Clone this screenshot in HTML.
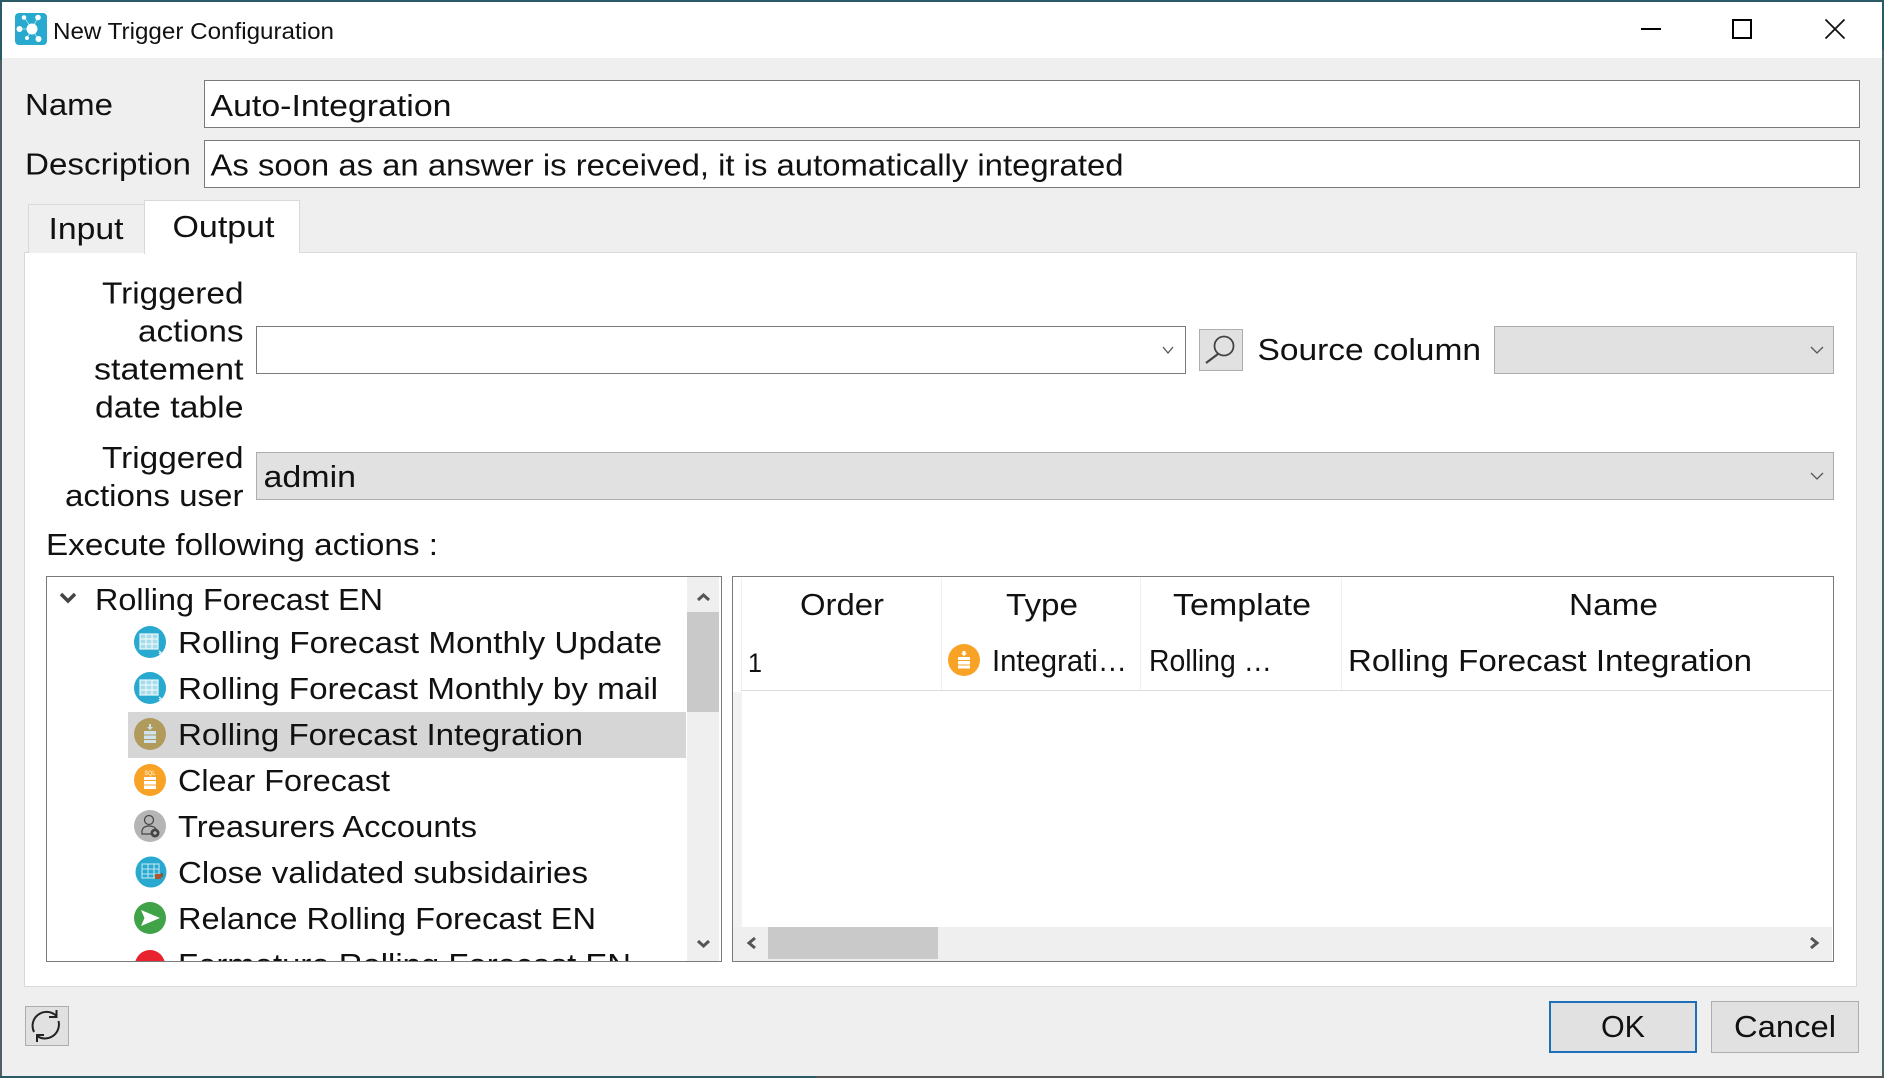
<!DOCTYPE html>
<html><head><meta charset="utf-8"><title>New Trigger Configuration</title>
<style>
html,body{margin:0;padding:0;background:#efefef;width:1884px;height:1078px;overflow:hidden}
svg{display:block}
text{font-family:"Liberation Sans",sans-serif;font-size:31px;fill:#111}
</style></head><body>
<svg width="1884" height="1078" viewBox="0 0 1884 1078" xmlns="http://www.w3.org/2000/svg">
<defs><clipPath id="tc"><rect x="47" y="577" width="640" height="384"/></clipPath></defs>
<rect width="1884" height="1078" fill="#2a5a66"/>
<rect x="2" y="2" width="1880" height="1074" fill="#efefef"/>
<rect x="2" y="2" width="1880" height="56" fill="#fff"/>
<rect x="0" y="60" width="2" height="1016" fill="#4f5f64"/><rect x="1882" y="50" width="2" height="1026" fill="#4b6268"/>
<rect x="816" y="1076" width="1068" height="2" fill="#555"/><rect x="0" y="1076" width="816" height="2" fill="#2a5a66"/>
<!-- title -->
<rect x="15" y="13" width="32" height="32" rx="4" fill="#27a9d0"/>
<path d="M32 29L19 29M32 29L24 17M32 29L38 17M32 29L27 38M32 29L38 39" stroke="#9adcee" stroke-width="1"/>
<g fill="#fff"><circle cx="32" cy="29" r="5.500"/><circle cx="19.500" cy="29" r="3"/><circle cx="24" cy="17.500" r="2.300"/><circle cx="38" cy="17.500" r="2.800"/><circle cx="27" cy="38" r="2"/><circle cx="38.500" cy="39" r="3"/></g>
<text x="53" y="39" style="font-size:23.500px" textLength="281" lengthAdjust="spacingAndGlyphs">New Trigger Configuration</text>
<rect x="1641" y="28" width="20" height="2" fill="#000"/>
<rect x="1733" y="20" width="18" height="18" fill="none" stroke="#000" stroke-width="2"/>
<path d="M1825.500 19.500L1844.500 38.500M1844.500 19.500L1825.500 38.500" stroke="#111" stroke-width="1.800" fill="none"/>
<!-- name / desc -->
<text x="25" y="115" textLength="88" lengthAdjust="spacingAndGlyphs">Name</text>
<text x="25" y="174.500" textLength="166" lengthAdjust="spacingAndGlyphs">Description</text>
<rect x="204.500" y="80.500" width="1655" height="47" fill="#fff" stroke="#7a7a7a"/>
<rect x="204.500" y="140.500" width="1655" height="47" fill="#fff" stroke="#7a7a7a"/>
<text x="210.500" y="116" textLength="241" lengthAdjust="spacingAndGlyphs">Auto-Integration</text>
<text x="210.500" y="175.500" textLength="913" lengthAdjust="spacingAndGlyphs">As soon as an answer is received, it is automatically integrated</text>
<!-- tabs and panel -->
<rect x="24.500" y="252.500" width="1832" height="734" fill="#fff" stroke="#d9d9d9"/>
<path d="M28.500 253V204.500H145V253" fill="#efefef" stroke="#d9d9d9"/>
<path d="M144.500 254V200.500H299.500V253" fill="#fff" stroke="#d9d9d9"/>
<rect x="145" y="250" width="154" height="4" fill="#fff"/>
<text x="48.500" y="239" textLength="75" lengthAdjust="spacingAndGlyphs">Input</text>
<text x="172.500" y="237" textLength="102" lengthAdjust="spacingAndGlyphs">Output</text>
<!-- labels -->
<text x="102" y="303.500" textLength="141.500" lengthAdjust="spacingAndGlyphs">Triggered</text>
<text x="138" y="341.500" textLength="105.500" lengthAdjust="spacingAndGlyphs">actions</text>
<text x="94" y="379.500" textLength="149.500" lengthAdjust="spacingAndGlyphs">statement</text>
<text x="95" y="417.500" textLength="148.500" lengthAdjust="spacingAndGlyphs">date table</text>
<text x="102" y="468" textLength="141.500" lengthAdjust="spacingAndGlyphs">Triggered</text>
<text x="65" y="506" textLength="178.500" lengthAdjust="spacingAndGlyphs">actions user</text>
<!-- combos -->
<rect x="256.500" y="326.500" width="929" height="47" fill="#fff" stroke="#7a7a7a"/>
<path d="M1163 347L1168 353L1173 347" fill="none" stroke="#555" stroke-width="1.300"/>
<rect x="1199.500" y="329.500" width="43" height="41" fill="#e1e1e1" stroke="#adadad"/>
<circle cx="1224" cy="346" r="9.500" fill="none" stroke="#444" stroke-width="1.800"/>
<path d="M1218 354L1206 363" stroke="#444" stroke-width="2.200" fill="none"/>
<text x="1257.500" y="360" textLength="223.500" lengthAdjust="spacingAndGlyphs">Source column</text>
<rect x="1494.500" y="326.500" width="339" height="47" fill="#e1e1e1" stroke="#adadad"/>
<path d="M1811 347L1817 353L1823 347" fill="none" stroke="#555" stroke-width="1.300"/>
<rect x="256.500" y="452.500" width="1577" height="47" fill="#e1e1e1" stroke="#adadad"/>
<path d="M1811 473L1817 479L1823 473" fill="none" stroke="#555" stroke-width="1.300"/>
<text x="263.500" y="487" textLength="92.500" lengthAdjust="spacingAndGlyphs">admin</text>
<text x="46" y="555" textLength="392" lengthAdjust="spacingAndGlyphs">Execute following actions :</text>
<!-- tree -->
<rect x="46.500" y="576.500" width="675" height="385" fill="#fff" stroke="#7a7a7a"/>
<rect x="128" y="712" width="558" height="46" fill="#d6d6d6"/>
<path d="M61 594L68 601L75 594" fill="none" stroke="#444" stroke-width="3.500"/>
<g clip-path="url(#tc)">
<text x="95" y="610" textLength="288" lengthAdjust="spacingAndGlyphs">Rolling Forecast EN</text>
<text x="178" y="653" textLength="484" lengthAdjust="spacingAndGlyphs">Rolling Forecast Monthly Update</text>
<text x="178" y="699" textLength="480" lengthAdjust="spacingAndGlyphs">Rolling Forecast Monthly by mail</text>
<text x="178" y="745" textLength="405" lengthAdjust="spacingAndGlyphs">Rolling Forecast Integration</text>
<text x="178" y="791" textLength="212" lengthAdjust="spacingAndGlyphs">Clear Forecast</text>
<text x="178" y="837" textLength="299" lengthAdjust="spacingAndGlyphs">Treasurers Accounts</text>
<text x="178" y="883" textLength="410" lengthAdjust="spacingAndGlyphs">Close validated subsidairies</text>
<text x="178" y="929" textLength="418" lengthAdjust="spacingAndGlyphs">Relance Rolling Forecast EN</text>
<text x="178" y="975" textLength="453" lengthAdjust="spacingAndGlyphs">Fermeture Rolling Forecast EN</text>
<!-- icons -->
<circle cx="150" cy="642" r="16" fill="#27a9d0"/>
<g fill="none" stroke="#eaf8fc" stroke-width="1.200"><rect x="140" y="634" width="18" height="15" fill="#a9dcea"/><path d="M140 639H158M140 644H158M146 634V649M152 634V649"/><path d="M159 651l2 1.500-2 1.500"/></g>
<circle cx="150" cy="688" r="16" fill="#27a9d0"/>
<g fill="none" stroke="#eaf8fc" stroke-width="1.200"><rect x="140" y="680" width="18" height="15" fill="#a9dcea"/><path d="M140 685H158M140 690H158M146 680V695M152 680V695"/><path d="M159 697l2 1.500-2 1.500"/></g>
<circle cx="150" cy="734" r="16" fill="#b09a5c"/>
<g fill="#cfe2f0"><rect x="144" y="731" width="12" height="3.500"/><rect x="144" y="735.500" width="12" height="3.500"/><rect x="144" y="740" width="12" height="3"/><path d="M149 724H151V727H153L150 730L147 727H149Z"/></g>
<circle cx="150" cy="780" r="16" fill="#f9a326"/>
<g fill="#fff"><rect x="144" y="777" width="12" height="3"/><rect x="144" y="781" width="12" height="3.500"/><rect x="144" y="785.500" width="12" height="3.500"/></g>
<text x="144.500" y="775" style="font-size:6px;font-weight:bold;fill:#fde8c0" textLength="11" lengthAdjust="spacingAndGlyphs">SQL</text>
<circle cx="150" cy="826" r="16" fill="#b5b5b5"/>
<g fill="none" stroke="#444" stroke-width="1.200"><circle cx="149" cy="820" r="4.500"/><path d="M142 834C141 827 146 826 149 826C152 826 156 827 156 830V834Z"/></g>
<circle cx="155" cy="833" r="4.500" fill="#444"/>
<path d="M153 833H157M155 831V835" stroke="#ddd" stroke-width="1"/>
<circle cx="151" cy="872" r="15.500" fill="#27a9d0"/>
<g fill="none" stroke="#bfe6f2" stroke-width="1.100"><rect x="142" y="864" width="17" height="14"/><path d="M142 869H159M142 874H159M148 864V878M154 864V878"/></g>
<rect x="155" y="874" width="6" height="5" fill="#b0552a"/><rect x="161" y="873" width="2" height="4" fill="#7d5a3a"/>
<circle cx="150" cy="918" r="16" fill="#40a348"/>
<path d="M141 910L160 918L141 926L144.500 918Z" fill="#fff"/>
<circle cx="150" cy="965" r="15" fill="#e8222e"/>
<path d="M143 962H155" stroke="#f7c4c7" stroke-width="1.500"/>
</g>
<!-- tree scrollbar -->
<rect x="687" y="577" width="32" height="384" fill="#efefef"/>
<rect x="687" y="612" width="32" height="100" fill="#c9c9c9"/>
<path d="M698 600L703.500 595L709 600" fill="none" stroke="#555" stroke-width="3"/>
<path d="M698 941L703.500 946L709 941" fill="none" stroke="#555" stroke-width="3"/>
<!-- table -->
<rect x="732.500" y="576.500" width="1101" height="385" fill="#fff" stroke="#7a7a7a"/>
<rect x="733" y="692" width="9" height="235" fill="#f2f2f2"/>
<rect x="733" y="927" width="1099" height="34" fill="#efefef"/>
<rect x="768" y="927" width="170" height="32" fill="#c9c9c9"/>
<path d="M755 938L749 943L755 948" fill="none" stroke="#555" stroke-width="3"/>
<path d="M1811 938L1817 943L1811 948" fill="none" stroke="#555" stroke-width="3"/>
<path d="M741.500 578V690M941.500 578V690M1140.500 578V690M1341.500 578V690" stroke="#efefef" stroke-width="1" fill="none"/>
<path d="M741 690.500H1832" stroke="#dcdcdc" stroke-width="1"/>
<text x="800" y="615" textLength="84" lengthAdjust="spacingAndGlyphs">Order</text>
<text x="1006" y="615" textLength="72" lengthAdjust="spacingAndGlyphs">Type</text>
<text x="1173" y="615" textLength="138" lengthAdjust="spacingAndGlyphs">Template</text>
<text x="1569" y="615" textLength="89" lengthAdjust="spacingAndGlyphs">Name</text>
<text x="748" y="672" style="font-size:27px" textLength="14" lengthAdjust="spacingAndGlyphs">1</text>
<circle cx="964" cy="660" r="16" fill="#f9a326"/>
<g fill="#fff"><rect x="958" y="657" width="12" height="3"/><rect x="958" y="661" width="12" height="3.500"/><rect x="958" y="665.500" width="12" height="3"/><path d="M962.500 651H965.500V653.500H967L964 656L961 653.500H962.500Z"/></g>
<text x="992" y="671" textLength="135" lengthAdjust="spacingAndGlyphs">Integrati…</text>
<text x="1149" y="671" textLength="123" lengthAdjust="spacingAndGlyphs">Rolling …</text>
<text x="1348" y="671" textLength="404" lengthAdjust="spacingAndGlyphs">Rolling Forecast Integration</text>
<!-- footer -->
<rect x="25.500" y="1006.500" width="43" height="39" fill="#e1e1e1" stroke="#adadad"/>
<path d="M34 1032A14 14 0 0 1 56 1015.500M58.500 1021A14 14 0 0 1 37 1036" fill="none" stroke="#222" stroke-width="2"/>
<path d="M56.500 1010V1017H49M37 1042V1035H44" fill="none" stroke="#222" stroke-width="2"/>
<rect x="1550" y="1002" width="146" height="50" fill="#e1e1e1" stroke="#1b70b8" stroke-width="2"/>
<text x="1601" y="1037" textLength="44" lengthAdjust="spacingAndGlyphs">OK</text>
<rect x="1711.500" y="1001.500" width="147" height="51" fill="#e1e1e1" stroke="#adadad"/>
<text x="1734" y="1037" textLength="102" lengthAdjust="spacingAndGlyphs">Cancel</text>
</svg>
</body></html>
